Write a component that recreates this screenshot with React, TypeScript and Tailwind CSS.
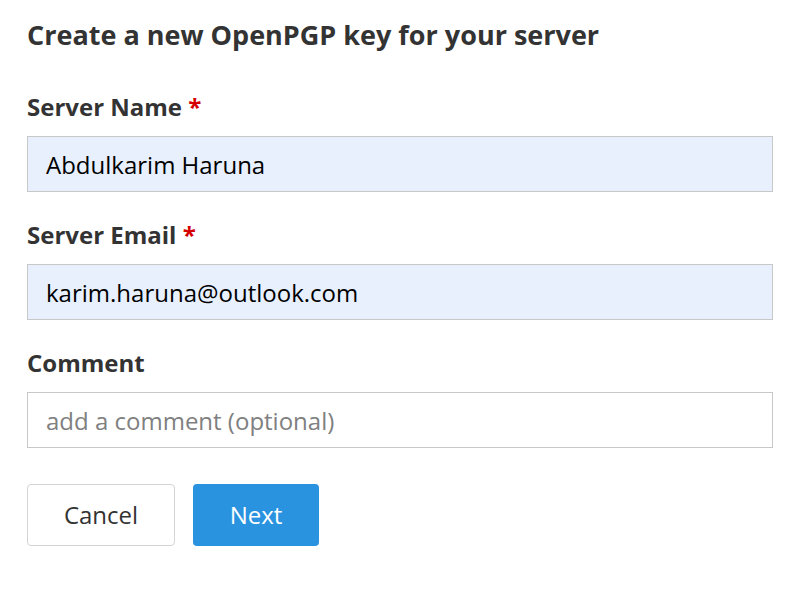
export default function App() {
  const font = { fontFamily: '"Open Sans", sans-serif' };
  return (
    <div className="min-h-[601px] w-[793px] bg-white pl-[27px] pr-[20px] pt-[17px] text-[#333]" style={font}>
      <h1 className="text-[27px] font-bold leading-[36px]">Create a new OpenPGP key for your server</h1>

      <form className="mt-[39px] flex flex-col">
        <label className="mb-[14px] text-[24px] font-bold leading-[30px]">
          Server Name <span className="text-[#d40000]">*</span>
        </label>
        <input
          defaultValue="Abdulkarim Haruna"
          className="h-[56px] w-full border border-[#c8c8c8] bg-[#e8f0fe] px-[18px] text-[24px] text-black outline-none"
        />

        <label className="mb-[14px] mt-[28px] text-[24px] font-bold leading-[30px]">
          Server Email <span className="text-[#d40000]">*</span>
        </label>
        <input
          defaultValue="karim.haruna@outlook.com"
          className="h-[56px] w-full border border-[#c8c8c8] bg-[#e8f0fe] px-[18px] text-[24px] text-black outline-none"
        />

        <label className="mb-[14px] mt-[28px] text-[24px] font-bold leading-[30px]">Comment</label>
        <input
          placeholder="add a comment (optional)"
          className="h-[56px] w-full border border-[#c8c8c8] bg-white px-[18px] text-[24px] text-black outline-none placeholder:text-[#808080]"
        />

        <div className="mt-[36px] flex gap-[18px]">
          <button
            type="button"
            className="h-[62px] w-[148px] rounded-[4px] border border-[#d4d4d4] bg-white text-[24px] text-[#333]"
          >
            Cancel
          </button>
          <button
            type="button"
            className="h-[62px] w-[126px] rounded-[4px] bg-[#2a93df] text-[24px] text-white"
          >
            Next
          </button>
        </div>
      </form>
    </div>
  );
}
